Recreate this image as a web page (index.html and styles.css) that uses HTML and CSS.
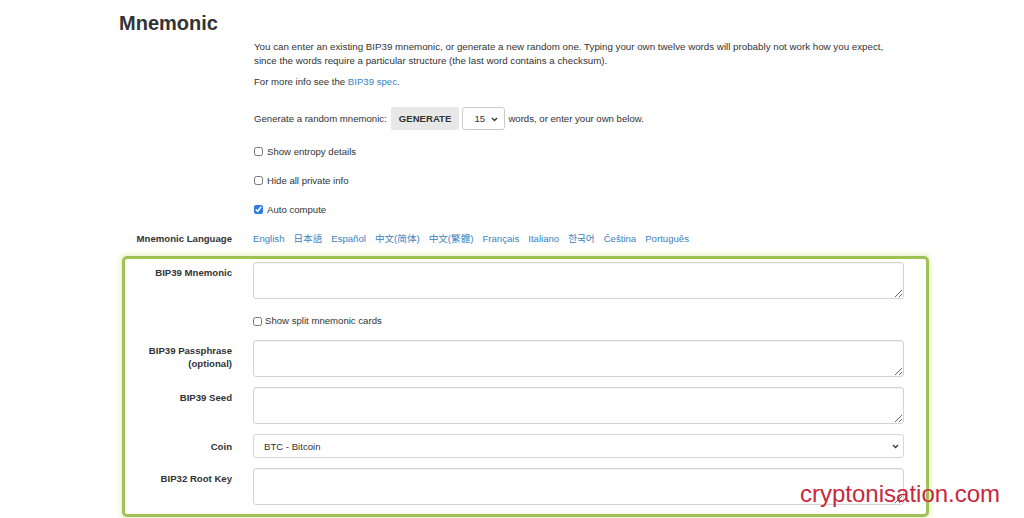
FILE: index.html
```html
<!DOCTYPE html>
<html lang="en">
<head>
<meta charset="utf-8">
<title>Mnemonic</title>
<link rel="stylesheet" href="styles.css">
</head>
<body>
<main class="page">
  <h1 class="title">Mnemonic</h1>

  <div class="row plain">
    <div class="label"></div>
    <div class="content">
      <p class="intro">You can enter an existing BIP39 mnemonic, or generate a new random one. Typing your own twelve words will probably not work how you expect,<br>since the words require a particular structure (the last word contains a checksum).</p>
      <p class="more">For more info see the <a href="#">BIP39 spec</a>.</p>
      <div class="generate">
        <span>Generate a random mnemonic:</span>
        <button class="btn" type="button">GENERATE</button>
        <span class="select-wrap small">
          <select class="select words"><option>15</option></select>
          <svg class="chev" width="7" height="5" viewBox="0 0 7 5"><path d="M1 1l2.5 2.5L6 1" fill="none" stroke="#333" stroke-width="1.3"/></svg>
        </span>
        <span>words, or enter your own below.</span>
      </div>
      <label class="check first"><input type="checkbox"><span>Show entropy details</span></label>
      <label class="check"><input type="checkbox"><span>Hide all private info</span></label>
      <label class="check"><input type="checkbox" checked><span>Auto compute</span></label>
    </div>
  </div>

  <div class="row plain lang-row">
    <div class="label">Mnemonic Language</div>
    <div class="content langs">
      <a href="#">English</a>
      <a href="#">日本語</a>
      <a href="#">Español</a>
      <a href="#">中文(简体)</a>
      <a href="#">中文(繁體)</a>
      <a href="#">Français</a>
      <a href="#">Italiano</a>
      <a href="#">한국어</a>
      <a href="#">Čeština</a>
      <a href="#">Português</a>
    </div>
  </div>

  <section class="highlight">
    <div class="row">
      <div class="label">BIP39 Mnemonic</div>
      <div class="content">
        <textarea class="field"></textarea>
        <label class="check split"><input type="checkbox"><span>Show split mnemonic cards</span></label>
      </div>
    </div>
    <div class="row gap">
      <div class="label">BIP39 Passphrase<br>(optional)</div>
      <div class="content"><textarea class="field"></textarea></div>
    </div>
    <div class="row gap">
      <div class="label">BIP39 Seed</div>
      <div class="content"><textarea class="field"></textarea></div>
    </div>
    <div class="row gap">
      <div class="label center">Coin</div>
      <div class="content">
        <span class="select-wrap wide">
          <select class="select coin"><option>BTC - Bitcoin</option></select>
          <svg class="chev" width="7" height="5" viewBox="0 0 7 5"><path d="M1 1l2.5 2.5L6 1" fill="none" stroke="#333" stroke-width="1.3"/></svg>
        </span>
      </div>
    </div>
    <div class="row gap">
      <div class="label">BIP32 Root Key</div>
      <div class="content"><textarea class="field"></textarea></div>
    </div>
  </section>
</main>
<div class="watermark">cryptonisation.com</div>
</body>
</html>
```

FILE: styles.css
```css
* { box-sizing: border-box; }

html, body {
  margin: 0;
  padding: 0;
  background: #ffffff;
}

body {
  font-family: "Liberation Sans", Arial, sans-serif;
  font-size: 9.6px;
  line-height: 14px;
  color: #333333;
  position: relative;
  height: 518px;
  overflow: hidden;
}

.page {
  padding-left: 122px;
  width: 929px;
}

.title {
  margin: 11px 0 0 -3px;
  font-size: 20px;
  line-height: 24px;
  font-weight: bold;
  color: #333333;
}

.row {
  display: grid;
  grid-template-columns: 107px 651px;
  column-gap: 21px;
}

.row.plain {
  padding-left: 3px;
}

.label {
  text-align: right;
  font-weight: bold;
  line-height: 13px;
  padding-top: 4px;
}

.label.center {
  padding-top: 0;
  align-self: center;
}

.content {
  min-width: 0;
}

.intro {
  margin: 5px 0 7px 1px;
  white-space: nowrap;
  font-size: 9.75px;
}

.more {
  margin: 0 0 18px 1px;
}

a {
  color: #3a83c0;
  text-decoration: none;
}

.generate {
  display: flex;
  align-items: center;
  height: 23px;
  margin-left: 1px;
}

.btn {
  height: 23px;
  margin: 0 3px 0 4px;
  padding: 0 8px;
  border: none;
  border-radius: 2px;
  background: #e8e8e8;
  color: #333333;
  font-family: inherit;
  font-size: 9.6px;
  font-weight: bold;
}

.select-wrap {
  position: relative;
  display: inline-flex;
}

.select-wrap.small {
  margin-right: 3px;
}

.select {
  appearance: none;
  -webkit-appearance: none;
  background: #ffffff;
  border: 1px solid #cccccc;
  border-radius: 3px;
  font-family: inherit;
  font-size: 9.6px;
  color: #333333;
  outline: none;
}

.select.words {
  width: 43px;
  height: 23px;
  padding: 0 0 0 11px;
}

.select.coin {
  width: 651px;
  height: 24px;
  padding: 0 0 0 10px;
  border-color: #d6d6d6;
}

.select-wrap.wide {
  display: flex;
}

.chev {
  position: absolute;
  top: 50%;
  margin-top: -2px;
  pointer-events: none;
}

.small .chev { right: 7px; }
.wide .chev { right: 5px; }

.check {
  display: flex;
  align-items: center;
  height: 15px;
  margin-top: 14px;
  margin-left: 1px;
}

.check input {
  width: 9px;
  height: 9px;
  margin: 0 4px 0 0;
  accent-color: #2f7de1;
}

.check.split {
  height: 14px;
  margin: 15px 0 2px 0;
}

.check.split input {
  margin-right: 3px;
}

.lang-row {
  margin-top: 15px;
}

.lang-row .label {
  padding-top: 0;
  line-height: 14px;
}

.langs {
  display: flex;
  gap: 9px;
  margin-left: 0;
}

.langs a {
  font-family: "Liberation Sans", "Noto Sans CJK SC", "Noto Sans CJK KR", sans-serif;
}

.highlight {
  margin-top: 10px;
  border: 3px solid #a0c155;
  border-radius: 5px;
  padding: 3px 22px 9px 0;
  box-shadow: 0 0 5px 2px rgba(214, 234, 150, 0.55);
}

.row.gap {
  margin-top: 10px;
}

.field {
  display: block;
  width: 651px;
  height: 37px;
  margin: 0;
  border: 1px solid #d3d3d3;
  border-radius: 3px;
  box-shadow: inset 0 1px 1px rgba(0, 0, 0, 0.05);
  font-family: inherit;
  font-size: 9.6px;
  resize: vertical;
}

.watermark {
  position: absolute;
  left: 800px;
  top: 482px;
  font-family: "Liberation Sans", Arial, sans-serif;
  font-size: 24px;
  line-height: 24px;
  color: #c8283b;
}
```
